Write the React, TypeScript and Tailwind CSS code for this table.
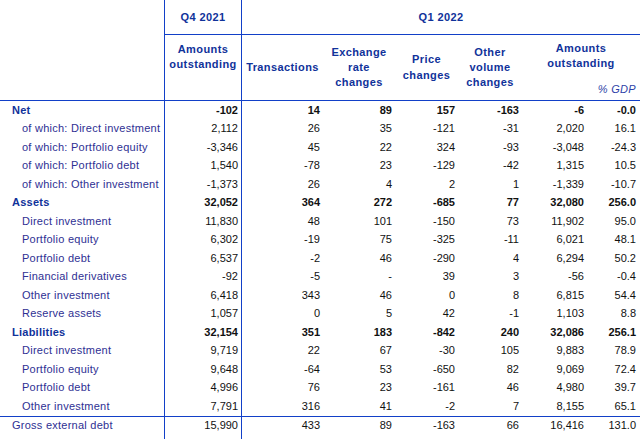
import React from 'react'

type Row = {
  label: string
  values: string[]
  kind: 'head' | 'sub' | 'foot'
}

const rows: Row[] = [
  { label: 'Net', kind: 'head', values: ['-102', '14', '89', '157', '-163', '-6', '-0.0'] },
  { label: 'of which: Direct investment', kind: 'sub', values: ['2,112', '26', '35', '-121', '-31', '2,020', '16.1'] },
  { label: 'of which: Portfolio equity', kind: 'sub', values: ['-3,346', '45', '22', '324', '-93', '-3,048', '-24.3'] },
  { label: 'of which: Portfolio debt', kind: 'sub', values: ['1,540', '-78', '23', '-129', '-42', '1,315', '10.5'] },
  { label: 'of which: Other investment', kind: 'sub', values: ['-1,373', '26', '4', '2', '1', '-1,339', '-10.7'] },
  { label: 'Assets', kind: 'head', values: ['32,052', '364', '272', '-685', '77', '32,080', '256.0'] },
  { label: 'Direct investment', kind: 'sub', values: ['11,830', '48', '101', '-150', '73', '11,902', '95.0'] },
  { label: 'Portfolio equity', kind: 'sub', values: ['6,302', '-19', '75', '-325', '-11', '6,021', '48.1'] },
  { label: 'Portfolio debt', kind: 'sub', values: ['6,537', '-2', '46', '-290', '4', '6,294', '50.2'] },
  { label: 'Financial derivatives', kind: 'sub', values: ['-92', '-5', '-', '39', '3', '-56', '-0.4'] },
  { label: 'Other investment', kind: 'sub', values: ['6,418', '343', '46', '0', '8', '6,815', '54.4'] },
  { label: 'Reserve assets', kind: 'sub', values: ['1,057', '0', '5', '42', '-1', '1,103', '8.8'] },
  { label: 'Liabilities', kind: 'head', values: ['32,154', '351', '183', '-842', '240', '32,086', '256.1'] },
  { label: 'Direct investment', kind: 'sub', values: ['9,719', '22', '67', '-30', '105', '9,883', '78.9'] },
  { label: 'Portfolio equity', kind: 'sub', values: ['9,648', '-64', '53', '-650', '82', '9,069', '72.4'] },
  { label: 'Portfolio debt', kind: 'sub', values: ['4,996', '76', '23', '-161', '46', '4,980', '39.7'] },
  { label: 'Other investment', kind: 'sub', values: ['7,791', '316', '41', '-2', '7', '8,155', '65.1'] },
]

const footer: Row = {
  label: 'Gross external debt',
  kind: 'foot',
  values: ['15,990', '433', '89', '-163', '66', '16,416', '131.0'],
}

const grid = 'grid grid-cols-[165px_77px_81px_72px_63px_64px_65px_53px]'
const line = 'border-[#1240c8]'

function DataRow({ row }: { row: Row }) {
  const bold = row.kind === 'head'
  return (
    <div className={`${grid} h-[18.5px] items-center`}>
      <div
        className={`h-full flex items-center border-r ${line} tracking-[0.25px] ${
          bold ? 'pl-3 font-bold text-[#10329a] tracking-[0.6px]' : row.kind === 'foot' ? 'pl-3 text-[#2e2f93]' : 'pl-[22px] text-[#2e2f93]'
        }`}
      >
        {row.label}
      </div>
      {row.values.map((v, i) => (
        <div
          key={i}
          className={`h-full flex items-center justify-end pr-[3px] text-[#111] ${
            i === 0 ? `border-r ${line}` : ''
          } ${i === 6 ? 'pr-[4px]' : ''} ${bold ? 'font-bold' : ''}`}
        >
          {v}
        </div>
      ))}
    </div>
  )
}

export default function App() {
  return (
    <div className="w-[640px] h-[439px] bg-white flex flex-col font-['Liberation_Sans',Arial,sans-serif] text-[11px] leading-none">
      {/* period header */}
      <div className={`${grid} h-[35px]`}>
        <div className={`border-r ${line}`} />
        <div className={`border-r border-b ${line} flex items-center justify-center font-bold text-[#10329a] tracking-[0.4px]`}>
          Q4 2021
        </div>
        <div className={`col-span-6 border-b ${line} flex items-center justify-center font-bold text-[#10329a] tracking-[0.4px]`}>
          Q1 2022
        </div>
      </div>

      {/* column header */}
      <div className={`${grid} h-[66px] border-b ${line} font-bold text-[#10329a] tracking-[0.4px] leading-[15.3px] text-center`}>
        <div className={`border-r ${line}`} />
        <div className={`border-r ${line} pt-[7px]`}>
          Amounts
          <br />
          outstanding
        </div>
        <div className="flex items-center justify-center">Transactions</div>
        <div className="flex items-center justify-center">
          <span>
            Exchange
            <br />
            rate
            <br />
            changes
          </span>
        </div>
        <div className="flex items-center justify-center">
          <span>
            Price
            <br />
            changes
          </span>
        </div>
        <div className="flex items-center justify-center">
          <span>
            Other
            <br />
            volume
            <br />
            changes
          </span>
        </div>
        <div className="col-span-2 flex flex-col pt-[6px]">
          <span>
            Amounts
            <br />
            outstanding
          </span>
          <span className="mt-[10px] self-end pr-[4px] font-normal italic text-[#2e3fa8] tracking-[0.3px]">
            % GDP
          </span>
        </div>
      </div>

      {rows.map((r, i) => (
        <DataRow key={i} row={r} />
      ))}

      <div className={`border-t ${line}`}>
        <DataRow row={footer} />
      </div>

      {/* filler keeps the vertical rules running to the bottom */}
      <div className={`${grid} flex-1`}>
        <div className={`border-r ${line}`} />
        <div className={`border-r ${line}`} />
      </div>
    </div>
  )
}
